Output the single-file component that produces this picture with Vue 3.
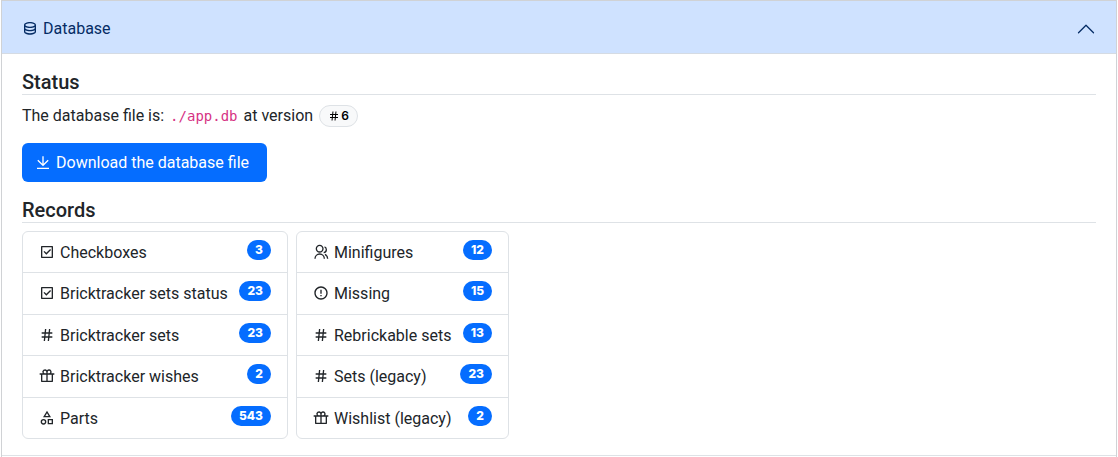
<script setup>
import { ref } from 'vue'

const open = ref(true)

const icons = {
  database: 'M5 12.5c0 .313.461.858 1.53 1.393C7.914 14.585 9.877 15 12 15s4.086-.415 5.47-1.107c1.069-.535 1.53-1.08 1.53-1.393v-2.171C17.35 11.348 14.827 12 12 12s-5.35-.652-7-1.671V12.5zm14 2.829C17.35 16.348 14.827 17 12 17s-5.35-.652-7-1.671V17.5c0 .313.461.858 1.53 1.393C7.914 19.585 9.877 20 12 20s4.086-.415 5.47-1.107c1.069-.535 1.53-1.08 1.53-1.393v-2.171zM3 17.5v-10C3 5.015 7.03 3 12 3s9 2.015 9 4.5v10c0 2.485-4.03 4.5-9 4.5s-9-2.015-9-4.5zM12 10c2.123 0 4.086-.415 5.47-1.107C18.539 8.358 19 7.813 19 7.5c0-.313-.461-.858-1.53-1.393C16.086 5.415 14.123 5 12 5s-4.086.415-5.47 1.107C5.461 6.642 5 7.187 5 7.5c0 .313.461.858 1.53 1.393C7.914 9.585 9.877 10 12 10z',
  download: 'M3 19h18v2H3v-2zm10-5.828L19.071 7.1l1.414 1.414L12 17 3.515 8.515 4.929 7.1 11 13.17V2h2v11.172z',
  hashtag: 'M7.784 14l.42-4H4V8h4.415l.525-5h2.011l-.525 5h3.989l.525-5h2.011l-.525 5H20v2h-3.784l-.42 4H20v2h-4.415l-.525 5h-2.011l.525-5H9.585l-.525 5H7.049l.525-5H4v-2h3.784zm2.011 0h3.99l.42-4h-3.99l-.42 4z',
  checkbox: 'M4 3h16a1 1 0 0 1 1 1v16a1 1 0 0 1-1 1H4a1 1 0 0 1-1-1V4a1 1 0 0 1 1-1zm1 2v14h14V5H5zm6.003 11L6.76 11.757l1.414-1.414 2.829 2.829 5.656-5.657 1.415 1.414L11.003 16z',
  gift: 'M15 2a4 4 0 0 1 3.464 6.001L23 8v2h-2v10a1 1 0 0 1-1 1H4a1 1 0 0 1-1-1V10H1V8l4.536.001A4 4 0 0 1 12 3.355 3.983 3.983 0 0 1 15 2zm-4 8H5v9h6v-9zm8 0h-6v9h6v-9zM9 4a2 2 0 0 0-.15 3.995L9 8h2V6a2 2 0 0 0-1.697-1.977l-.154-.018L9 4zm6 0a2 2 0 0 0-1.995 1.85L13 6v2h2a2 2 0 0 0 1.995-1.85L17 6a2 2 0 0 0-2-2z',
  shapes: 'M12 1l6 10H6L12 1zm0 3.887L9.532 9h4.936L12 4.887zM6.75 20a2.25 2.25 0 1 0 0-4.5 2.25 2.25 0 0 0 0 4.5zm0 2a4.25 4.25 0 1 1 0-8.5 4.25 4.25 0 0 1 0 8.5zM15 15.5v4h4v-4h-4zm-2-2h8v8h-8v-8z',
  group: 'M2 22a8 8 0 1 1 16 0h-2a6 6 0 1 0-12 0H2zm8-9c-3.315 0-6-2.685-6-6s2.685-6 6-6 6 2.685 6 6-2.685 6-6 6zm0-2c2.21 0 4-1.79 4-4s-1.79-4-4-4-4 1.79-4 4 1.79 4 4 4zm8.284 3.703A8.002 8.002 0 0 1 23 22h-2a6.001 6.001 0 0 0-3.537-5.473l.82-1.824zm-.688-11.29A5.5 5.5 0 0 1 21 8.5a5.499 5.499 0 0 1-5 5.478v-2.013a3.5 3.5 0 0 0 1.041-6.609l.555-1.943z',
  warning: 'M12 22C6.477 22 2 17.523 2 12S6.477 2 12 2s10 4.477 10 10-4.477 10-10 10zm0-2a8 8 0 1 0 0-16 8 8 0 0 0 0 16zm-1-5h2v2h-2v-2zm0-8h2v6h-2V7z',
}

const lists = [
  [
    { icon: 'checkbox', name: 'Checkboxes', count: 3 },
    { icon: 'checkbox', name: 'Bricktracker sets status', count: 23 },
    { icon: 'hashtag', name: 'Bricktracker sets', count: 23 },
    { icon: 'gift', name: 'Bricktracker wishes', count: 2 },
    { icon: 'shapes', name: 'Parts', count: 543 },
  ],
  [
    { icon: 'group', name: 'Minifigures', count: 12 },
    { icon: 'warning', name: 'Missing', count: 15 },
    { icon: 'hashtag', name: 'Rebrickable sets', count: 13 },
    { icon: 'hashtag', name: 'Sets (legacy)', count: 23 },
    { icon: 'gift', name: 'Wishlist (legacy)', count: 2 },
  ],
]
</script>

<template>
  <main class="accordion">
    <section class="item">
      <h2 class="header">
        <button class="toggle" type="button" :aria-expanded="open" aria-controls="database-panel" @click="open = !open">
          <span class="label">
            <svg class="icon" viewBox="0 0 24 24" aria-hidden="true"><path :d="icons.database" /></svg>
            Database
          </span>
          <svg class="chevron" :class="{ closed: !open }" viewBox="0 0 16 16" aria-hidden="true">
            <path d="m2 11 6-6 6 6" />
          </svg>
        </button>
      </h2>
      <div v-show="open" id="database-panel" class="body">
        <h3 class="title">Status</h3>
        <p class="status">
          The database file is: <code>./app.db</code> at version
          <span class="version"><svg class="icon" viewBox="0 0 24 24" aria-hidden="true"><path :d="icons.hashtag" /></svg>6</span>
        </p>
        <a class="download" href="#download">
          <svg class="icon" viewBox="0 0 24 24" aria-hidden="true"><path :d="icons.download" /></svg>
          Download the database file
        </a>
        <h3 class="title">Records</h3>
        <div class="records">
          <ul v-for="(list, i) in lists" :key="i" class="list">
            <li v-for="row in list" :key="row.name" class="row">
              <span class="label">
                <svg class="icon" viewBox="0 0 24 24" aria-hidden="true"><path :d="icons[row.icon]" /></svg>
                {{ row.name }}
              </span>
              <span class="count">{{ row.count }}</span>
            </li>
          </ul>
        </div>
      </div>
    </section>
  </main>
</template>

<style>
body {
  margin: 0;
  background: #fff;
}
</style>

<style scoped>
.accordion {
  box-sizing: border-box;
  min-height: 100vh;
  margin: 0 1px;
  border: 1px solid #d0d2d5;
  border-bottom: 0;
  color: #212529;
  font: 400 16px/24px Roboto, "Liberation Sans", sans-serif;
}
.item {
  border-bottom: 1px solid #dee2e6;
}
.header {
  margin: 0;
  font-size: 16px;
  font-weight: 400;
}
.toggle {
  display: flex;
  align-items: center;
  justify-content: space-between;
  width: 100%;
  min-height: 53px;
  padding: 3px 20px 0;
  border: 0;
  border-bottom: 1px solid #d5dbe3;
  background: #cfe2ff;
  color: #052c65;
  font: inherit;
  text-align: left;
  cursor: pointer;
}
.label,
.download {
  display: inline-flex;
  align-items: center;
  gap: 5px;
}
.label {
  align-items: flex-start;
  line-height: 26px;
}
.icon {
  flex: none;
  width: 16px;
  height: 16px;
  fill: currentColor;
}
.label .icon {
  margin-top: 4px;
}
.chevron {
  width: 20px;
  height: 20px;
  fill: none;
  stroke: currentColor;
  stroke-linecap: round;
  stroke-linejoin: round;
}
.closed {
  transform: rotate(180deg);
}
.body {
  padding: 16px 20px;
}
.title {
  margin: 0 0 8px;
  border-bottom: 1px solid #dee2e6;
  font-size: 20px;
  font-weight: 500;
  line-height: 24px;
}
.status {
  display: flex;
  flex-wrap: wrap;
  align-items: center;
  gap: 6px;
  margin: 0 0 14px;
  line-height: 26px;
}
code {
  color: #d63384;
  font: 14px/24px "DejaVu Sans Mono", monospace;
}
.version {
  display: inline-flex;
  align-items: center;
  gap: 1px;
  padding: 4px 8px;
  border: 1px solid #dee2e6;
  border-radius: 12px;
  background: #f8f9fa;
  color: #000;
  font-family: Inter, sans-serif;
  font-size: 12px;
  font-weight: 600;
  line-height: 12px;
}
.version .icon {
  width: 12px;
  height: 12px;
}
.download {
  box-sizing: border-box;
  min-width: 245px;
  min-height: 39px;
  margin-bottom: 16px;
  padding: 0 13px;
  border-radius: 6px;
  background: #056dff;
  color: #fff;
  text-decoration: none;
  vertical-align: top;
}
.records {
  display: grid;
  grid-template-columns: minmax(266px, max-content) minmax(213px, max-content);
  align-items: start;
  gap: 8px;
}
.list {
  box-sizing: border-box;
  display: flex;
  flex-direction: column;
  min-height: 208px;
  margin: 0;
  padding: 0;
  border: 1px solid #dee2e6;
  border-radius: 6px;
  list-style: none;
}
.row {
  box-sizing: border-box;
  display: flex;
  flex: 1;
  align-items: flex-start;
  justify-content: space-between;
  gap: 8px;
  padding: 8px 16px 6px;
}
.row + .row {
  border-top: 1px solid #dee2e6;
}
.count {
  padding: 4px 8px;
  border-radius: 10px;
  background: #056dff;
  color: #fff;
  font-family: Inter, sans-serif;
  font-size: 12px;
  font-weight: 800;
  line-height: 12px;
}
</style>
